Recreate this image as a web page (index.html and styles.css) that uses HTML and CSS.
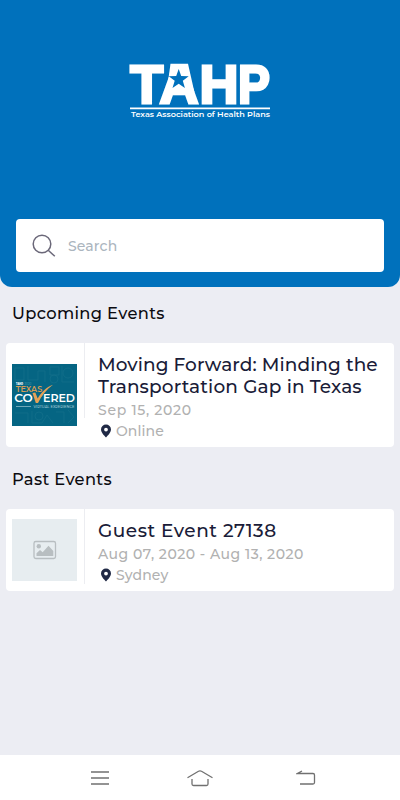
FILE: index.html
```
<!DOCTYPE html>
<html lang="en">
<head>
    <meta charset="UTF-8">
    <title>TAHP Events</title>
    <link rel="stylesheet" href="styles.css">
</head>
<body>
    <header class="header">
        <svg class="logo" width="144" height="60" viewBox="128 61 144 60">
            <text class="logo-name" x="130.3 159.5 199.5 238" y="102.6">TAH<tspan textLength="32" lengthAdjust="spacingAndGlyphs">P</tspan></text>
            <path d="M170.500 63.800h17.500l6.500 28.700h-28z" fill="#fff"/>
            <path d="M178.700 69l2.500 7 7.500.2-5.900 4.500 2.100 7.200-6.200-4.200-6.200 4.200 2.200-7.200-6-4.500 7.500-.2z" fill="#0071bc"/>
            <path d="M130 108.300h140" stroke="#fff" stroke-width="1.800"/>
            <text class="logo-sub" x="131" y="117" textLength="139" lengthAdjust="spacingAndGlyphs">Texas Association of Health Plans</text>
        </svg>
        <div class="search">
            <svg width="24" height="24" viewBox="0 0 24 24" fill="none" stroke="#6b6879" stroke-width="1.500">
                <circle cx="10" cy="10" r="8.800"/>
                <path d="M16.200 16.200l6.600 6.100"/>
            </svg>
            <span class="search-text">Search</span>
        </div>
    </header>

    <main class="content">
        <h2>Upcoming Events</h2>
        <div class="card card-upcoming">
            <div class="thumb">
                <svg width="65" height="62" viewBox="0 0 65 62">
                    <rect width="65" height="62" fill="#056583"/>
                    <g fill="none" stroke="#126e8a" stroke-width=".8">
                        <path d="M3 4h9v12H3zM16 2v14h10V7h7v11M38 3h9v8h-9zM50 2v16h12M3 49h13v10M20 47v12h10l5-8 6 8M44 48h8v11M56 46l6 7-6 6"/>
                        <circle cx="42" cy="15" r="4"/>
                        <circle cx="27" cy="52" r="4"/>
                        <circle cx="56" cy="9" r="5"/>
                    </g>
                    <text x="4" y="21" font-size="3" font-weight="800" fill="#fff" textLength="7" lengthAdjust="spacingAndGlyphs">TAHP</text>
                    <text x="12.500" y="21" font-size="3" fill="#4295a9" textLength="7" lengthAdjust="spacingAndGlyphs">2020</text>
                    <text x="3.700" y="28.200" font-size="8.500" font-weight="600" fill="#d79c54" textLength="26.500" lengthAdjust="spacingAndGlyphs">TEXAS</text>
                    <text x="2.300" y="38" font-size="10.500" font-weight="600" fill="#fff" textLength="18.500" lengthAdjust="spacingAndGlyphs">CO</text>
                    <text x="31" y="38" font-size="10.500" font-weight="600" fill="#fff" textLength="32" lengthAdjust="spacingAndGlyphs">ERED</text>
                    <path d="M20.500 29l2.800-.6 2.400 6C29.500 28 34 23.500 41 20.800 34.500 25.500 29.500 32 26 39h-2.200z" fill="#e5a156"/>
                    <path d="M4 42.500h15" stroke="#9fc5d1" stroke-width=".7"/>
                    <text x="21.500" y="43.500" font-size="3.900" fill="#a5cbd6" textLength="41" lengthAdjust="spacingAndGlyphs">VIRTUAL EXPERIENCE</text>
                </svg>
            </div>
            <div class="info">
                <h3><span class="line-one">Moving Forward: Minding the</span><br><span class="line-two">Transportation Gap in Texas</span></h3>
                <p class="date">Sep 15, 2020</p>
                <p class="place">
                    <svg width="12" height="14" viewBox="0 0 12 14"><path fill-rule="evenodd" d="M6 .5A5 5 0 0 0 1 5.500C1 8.500 4.300 11.500 6 13.500 7.700 11.500 11 8.500 11 5.500A5 5 0 0 0 6 .5zM6 3.700a1.900 1.900 0 1 1 0 3.800 1.900 1.900 0 0 1 0-3.800z" fill="#202945"/></svg>
                    <span>Online</span>
                </p>
            </div>
        </div>

        <h2 class="past-title">Past Events</h2>
        <div class="card card-past">
            <div class="thumb">
                <svg width="65" height="62" viewBox="0 0 65 62">
                    <rect width="65" height="62" fill="#e7edf0"/>
                    <rect x="22" y="22.500" width="21.500" height="17" rx="1.800" fill="none" stroke="#b8bec1" stroke-width="1.300"/>
                    <circle cx="26.800" cy="27.200" r="2.200" fill="#b8bec1"/>
                    <path d="M24.500 37v-2.800l3.500-3.200 2.700 2.200 5.800-6.400 4.800 5.200v5z" fill="#b8bec1"/>
                </svg>
            </div>
            <div class="info">
                <h3><span class="guest">Guest Event 27138</span></h3>
                <p class="date date-range">Aug 07, 2020 - Aug 13, 2020</p>
                <p class="place">
                    <svg width="12" height="14" viewBox="0 0 12 14"><path fill-rule="evenodd" d="M6 .5A5 5 0 0 0 1 5.500C1 8.500 4.300 11.500 6 13.500 7.700 11.500 11 8.500 11 5.500A5 5 0 0 0 6 .5zM6 3.700a1.900 1.900 0 1 1 0 3.800 1.900 1.900 0 0 1 0-3.800z" fill="#202945"/></svg>
                    <span>Sydney</span>
                </p>
            </div>
        </div>
    </main>

    <nav class="navbar">
        <svg width="20" height="16" viewBox="0 0 20 16"><path d="M1 2h18M1 8h18M1 14h18"/></svg>
        <svg class="home" width="28" height="18" viewBox="0 0 28 18"><path d="M1.500 8.800L12.500 2.300q1.500-.8 3 0L26.500 8.800M6 10v5q0 1.500 1.500 1.500h13q1.500 0 1.500-1.500v-5"/></svg>
        <svg width="20" height="16" viewBox="0 0 20 16"><path d="M6 1L1.500 3.500H17q1.500 0 1.500 1.500v7.500q0 1.500-1.500 1.500H4"/></svg>
    </nav>
</body>
</html>
```
FILE: styles.css
```
* {
    box-sizing: border-box;
}

body {
    display: flex;
    flex-direction: column;
    height: 800px;
    margin: 0;
    background-color: #ecedf3;
    font-family: Montserrat, Inter, sans-serif;
    font-weight: 500;
}

h2, h3, p {
    margin: 0;
    font-weight: 500;
}

svg {
    display: block;
    flex: none;
}

.header {
    display: flex;
    flex-direction: column;
    justify-content: space-between;
    align-items: center;
    height: 287px;
    padding: 61px 16px 15px;
    background-color: #0071bc;
    border-radius: 0 0 12px 12px;
}

.logo {
    overflow: visible;
}

.logo-name {
    font-family: "Liberation Sans", Arial, sans-serif;
    font-size: 54px;
    font-weight: 700;
    fill: #fff;
    stroke: #fff;
    stroke-width: 2.8px;
}

.logo-sub {
    font-size: 6.8px;
    font-weight: 600;
    fill: #fff;
}

.search {
    display: flex;
    align-items: center;
    gap: 12px;
    width: 100%;
    height: 53px;
    padding: 0 16px;
    background-color: #fff;
    border-radius: 4px;
}

.search-text {
    color: #abb5be;
    font-size: 14px;
    letter-spacing: 0.15px;
}

.content {
    flex: 1;
    padding: 0 6px;
}

h2 {
    height: 56px;
    padding: 14px 6px 0;
    color: #0b0b10;
    font-size: 16.3px;
    line-height: 24px;
    letter-spacing: 0.35px;
}

.past-title {
    height: 62px;
    padding-top: 20px;
}

.card {
    display: flex;
    background-color: #fff;
    border-radius: 4px;
}

.card-upcoming {
    height: 104px;
}

.card-past {
    height: 82px;
}

.thumb {
    display: flex;
    width: 79px;
    height: 75px;
    padding: 10px 6px 0;
    border-right: 1px solid #ecedf1;
}

.card-upcoming .thumb {
    padding-top: 21px;
}

.info {
    flex: 1;
    padding: 11px 0 0 13px;
    white-space: nowrap;
}

h3 {
    color: #1a1c38;
    font-size: 18.5px;
    line-height: 22px;
}

.line-one {
    letter-spacing: 0.08px;
}

.line-two {
    letter-spacing: 0.14px;
}

.guest {
    letter-spacing: 0.5px;
}

.date, .place {
    color: #b1b1b1;
    font-size: 14px;
    line-height: 21px;
    letter-spacing: 0.7px;
}

.date {
    margin-top: 2px;
}

.date-range {
    letter-spacing: 0.5px;
}

.place {
    display: flex;
    align-items: center;
    gap: 4px;
    padding-left: 2px;
    letter-spacing: 0.1px;
}

.place svg {
    margin-bottom: 2px;
}

.navbar {
    display: flex;
    justify-content: space-between;
    align-items: center;
    height: 45px;
    padding: 0 84px 0 90px;
    background-color: #fff;
}

.home {
    margin-right: 6px;
}

.navbar path {
    fill: none;
    stroke: #707070;
    stroke-width: 1.3;
}
```
